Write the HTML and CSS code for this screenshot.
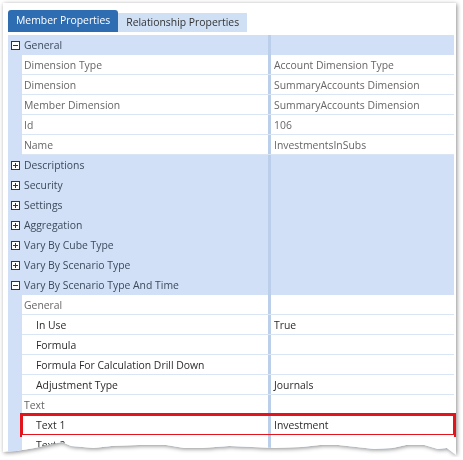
FILE: index.html
```html
<!DOCTYPE html>
<html lang="en">
<head>
  <meta charset="UTF-8">
  <title>Member Properties</title>
  <link rel="stylesheet" href="styles.css">
</head>
<body>

  <div class="shot">
    <div class="frame">

      <div class="tabs">
        <div class="tab active">Member Properties</div>
        <div class="tab">Relationship Properties</div>
      </div>

      <div class="grid">
        <div class="row cat">
          <div class="gutter"><span class="box minus"></span></div>
          <div class="cells"><div class="name">General</div><div class="sep"></div><div class="value"></div></div>
        </div>
        <div class="row prop ro">
          <div class="gutter"></div>
          <div class="cells"><div class="name">Dimension Type</div><div class="sep"></div><div class="value">Account Dimension Type</div></div>
        </div>
        <div class="row prop ro">
          <div class="gutter"></div>
          <div class="cells"><div class="name">Dimension</div><div class="sep"></div><div class="value">SummaryAccounts Dimension</div></div>
        </div>
        <div class="row prop ro">
          <div class="gutter"></div>
          <div class="cells"><div class="name">Member Dimension</div><div class="sep"></div><div class="value">SummaryAccounts Dimension</div></div>
        </div>
        <div class="row prop ro">
          <div class="gutter"></div>
          <div class="cells"><div class="name">Id</div><div class="sep"></div><div class="value">106</div></div>
        </div>
        <div class="row prop ro">
          <div class="gutter"></div>
          <div class="cells"><div class="name">Name</div><div class="sep"></div><div class="value">InvestmentsInSubs</div></div>
        </div>
        <div class="row cat">
          <div class="gutter"><span class="box plus"></span></div>
          <div class="cells"><div class="name">Descriptions</div><div class="sep"></div><div class="value"></div></div>
        </div>
        <div class="row cat">
          <div class="gutter"><span class="box plus"></span></div>
          <div class="cells"><div class="name">Security</div><div class="sep"></div><div class="value"></div></div>
        </div>
        <div class="row cat">
          <div class="gutter"><span class="box plus"></span></div>
          <div class="cells"><div class="name">Settings</div><div class="sep"></div><div class="value"></div></div>
        </div>
        <div class="row cat">
          <div class="gutter"><span class="box plus"></span></div>
          <div class="cells"><div class="name">Aggregation</div><div class="sep"></div><div class="value"></div></div>
        </div>
        <div class="row cat">
          <div class="gutter"><span class="box plus"></span></div>
          <div class="cells"><div class="name">Vary By Cube Type</div><div class="sep"></div><div class="value"></div></div>
        </div>
        <div class="row cat">
          <div class="gutter"><span class="box plus"></span></div>
          <div class="cells"><div class="name">Vary By Scenario Type</div><div class="sep"></div><div class="value"></div></div>
        </div>
        <div class="row cat">
          <div class="gutter"><span class="box minus"></span></div>
          <div class="cells"><div class="name">Vary By Scenario Type And Time</div><div class="sep"></div><div class="value"></div></div>
        </div>
        <div class="row prop sub">
          <div class="gutter"></div>
          <div class="cells"><div class="name">General</div><div class="sep"></div><div class="value"></div></div>
        </div>
        <div class="row prop nest">
          <div class="gutter"></div>
          <div class="cells"><div class="name">In Use</div><div class="sep"></div><div class="value">True</div></div>
        </div>
        <div class="row prop nest">
          <div class="gutter"></div>
          <div class="cells"><div class="name">Formula</div><div class="sep"></div><div class="value"></div></div>
        </div>
        <div class="row prop nest">
          <div class="gutter"></div>
          <div class="cells"><div class="name">Formula For Calculation Drill Down</div><div class="sep"></div><div class="value"></div></div>
        </div>
        <div class="row prop nest">
          <div class="gutter"></div>
          <div class="cells"><div class="name">Adjustment Type</div><div class="sep"></div><div class="value">Journals</div></div>
        </div>
        <div class="row prop sub">
          <div class="gutter"></div>
          <div class="cells"><div class="name">Text</div><div class="sep"></div><div class="value"></div></div>
        </div>
        <div class="row prop nest">
          <div class="gutter"></div>
          <div class="cells mark"><div class="name">Text 1</div><div class="sep"></div><div class="value">Investment</div></div>
        </div>
        <div class="row prop nest">
          <div class="gutter"></div>
          <div class="cells"><div class="name">Text 2</div><div class="sep"></div><div class="value"></div></div>
        </div>
      </div>

    </div>
  </div>

</body>
</html>
```

FILE: styles.css
```css
body {
  margin: 0;
  background-color: #ffffff;
  font-family: "Open Sans", "Noto Sans", sans-serif;
  font-size: 10.4px;
  color: #333;
}

.shot {
  padding: 3px 0 0 3px;
  width: 453px;
  filter: drop-shadow(1px 1px 2px rgba(0, 0, 0, 0.45));
}

.frame {
  background-color: #ffffff;
  height: 454px;
  padding: 7px 0 0 5px;
  box-sizing: border-box;
  overflow: hidden;
  clip-path: polygon(0 0, 100% 0, 100% 452px, 98% 445px, 96% 446px, 93% 442px, 89% 442px, 86% 445px, 82% 446px, 78% 444px, 74% 442px, 70% 442px, 66% 444px, 60% 445px, 55% 444px, 50% 443px, 44% 445px, 40% 445px, 36% 442px, 30% 442px, 24% 443px, 20% 445px, 15% 443px, 13% 439px, 10% 442px, 7% 445px, 3% 448px, 0 449px);
}

.tabs {
  display: flex;
  align-items: flex-end;
  height: 22px;
  margin-bottom: 3px;
}

.tab {
  padding: 0 8px;
  height: 19px;
  line-height: 19px;
  background-color: #cfdff4;
  color: #333;
}

.tab.active {
  height: 22px;
  line-height: 21px;
  background-color: #2f6db3;
  color: #ffffff;
  border-radius: 3px 3px 0 0;
}

.grid {
  width: 446px;
}

.row {
  display: flex;
  height: 20px;
  line-height: 20px;
  background-color: #d1e0f6;
}

.gutter {
  width: 14px;
  flex: none;
  display: flex;
  align-items: center;
  justify-content: center;
}

.cells {
  flex: 1;
  display: flex;
  min-width: 0;
}

.name {
  width: 246px;
  flex: none;
  box-sizing: border-box;
  padding-left: 2px;
  white-space: nowrap;
  overflow: hidden;
}

.sep {
  width: 3px;
  flex: none;
  background-color: #bccfea;
}

.value {
  flex: 1;
  padding-left: 3px;
  white-space: nowrap;
}

.cat .name {
  color: #3d4a5c;
}

.prop .cells {
  background-color: #ffffff;
  border-bottom: 1px solid #d9e4f4;
}

.ro .name,
.ro .value {
  color: #666;
}

.sub .name {
  color: #666;
}

.nest .name {
  padding-left: 14px;
  color: #2b2b2b;
}

.nest .value {
  color: #2b2b2b;
}

.mark {
  outline: 3px solid #e3141b;
  outline-offset: -1px;
}

.box {
  position: relative;
  width: 7px;
  height: 7px;
  border: 1px solid #333;
  background-color: #ffffff;
}

.box::before {
  content: "";
  position: absolute;
  left: 1px;
  top: 3px;
  width: 5px;
  height: 1px;
  background-color: #333;
}

.box.plus::after {
  content: "";
  position: absolute;
  left: 3px;
  top: 1px;
  width: 1px;
  height: 5px;
  background-color: #333;
}
```
